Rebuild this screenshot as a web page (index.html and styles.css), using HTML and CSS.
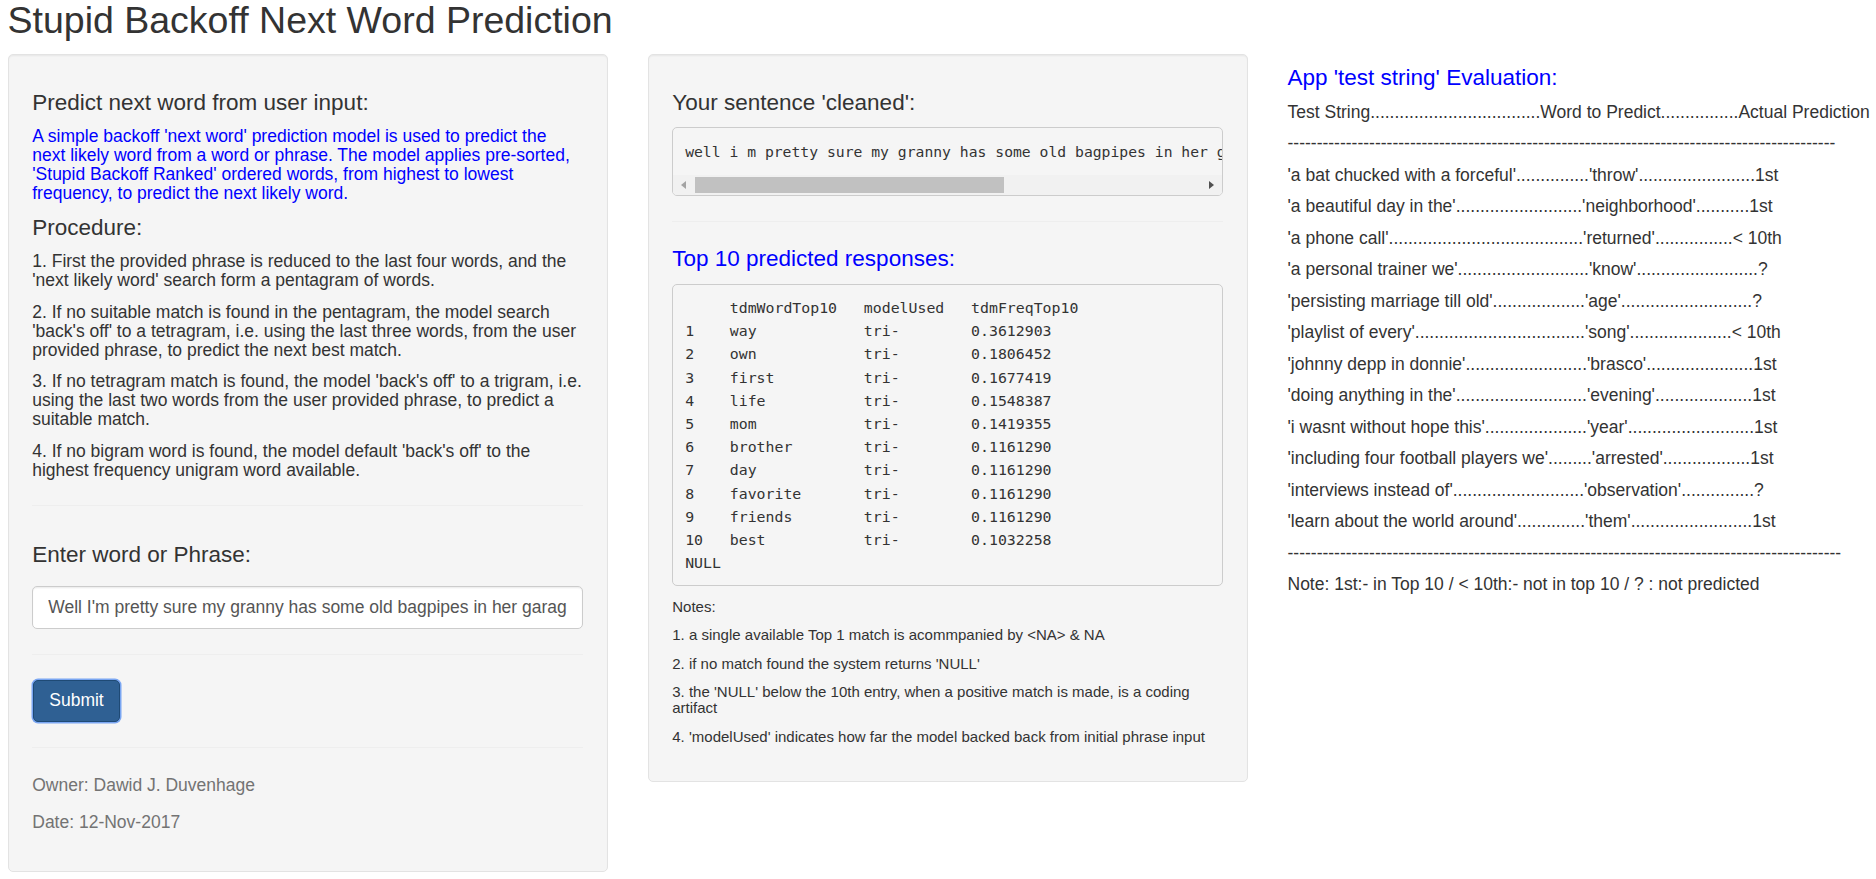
FILE: index.html
```html
<!DOCTYPE html>
<html lang="en">
<head>
<meta charset="utf-8">
<title>Stupid Backoff Next Word Prediction</title>
<link rel="stylesheet" href="styles.css">
</head>
<body>
<div class="page">
  <h2 class="title">Stupid Backoff Next Word Prediction</h2>
  <div class="row">
    <div class="col">
      <div class="well">
        <h4>Predict next word from user input:</h4>
        <h5 class="blue">A simple backoff 'next word' prediction model is used to predict the next likely word from a word or phrase. The model applies pre-sorted, 'Stupid Backoff Ranked' ordered words, from highest to lowest frequency, to predict the next likely word.</h5>
        <h4>Procedure:</h4>
        <h5>1. First the provided phrase is reduced to the last four words, and the 'next likely word' search form a pentagram of words.</h5>
        <h5>2. If no suitable match is found in the pentagram, the model search 'back's off' to a tetragram, i.e. using the last three words, from the user provided phrase, to predict the next best match.</h5>
        <h5>3. If no tetragram match is found, the model 'back's off' to a trigram, i.e. using the last two words from the user provided phrase, to predict a suitable match.</h5>
        <h5>4. If no bigram word is found, the model default 'back's off' to the highest frequency unigram word available.</h5>
        <hr>
        <div class="form-group">
          <label class="control-label" for="text"><h4>Enter word or Phrase:</h4></label>
          <input id="text" class="form-control" type="text" value="Well I'm pretty sure my granny has some old bagpipes in her garage I'll dust them off and be on my">
        </div>
        <hr>
        <button class="btn-primary" type="button">Submit</button>
        <hr>
        <span class="help-block">Owner: Dawid J. Duvenhage</span>
        <span class="help-block">Date: 12-Nov-2017</span>
      </div>
    </div>
    <div class="col">
      <div class="well">
        <h4>Your sentence 'cleaned':</h4>
        <div class="pre scroll-pre">
          <div class="pre-text">well i m pretty sure my granny has some old bagpipes in her garage i ll dust them off and be on my</div>
          <div class="scrollbar">
            <div class="sb-btn"><span class="arrow-left"></span></div>
            <div class="sb-track"><div class="sb-thumb"></div></div>
            <div class="sb-btn"><span class="arrow-right"></span></div>
          </div>
        </div>
        <hr>
        <h4 class="blue">Top 10 predicted responses:</h4>
        <pre class="pre table-pre">     tdmWordTop10   modelUsed   tdmFreqTop10
1    way            tri-        0.3612903
2    own            tri-        0.1806452
3    first          tri-        0.1677419
4    life           tri-        0.1548387
5    mom            tri-        0.1419355
6    brother        tri-        0.1161290
7    day            tri-        0.1161290
8    favorite       tri-        0.1161290
9    friends        tri-        0.1161290
10   best           tri-        0.1032258
NULL</pre>
        <h6>Notes:</h6>
        <h6>1. a single available Top 1 match is acommpanied by &lt;NA&gt; &amp; NA</h6>
        <h6>2. if no match found the system returns 'NULL'</h6>
        <h6>3. the 'NULL' below the 10th entry, when a positive match is made, is a coding artifact</h6>
        <h6>4. 'modelUsed' indicates how far the model backed back from initial phrase input</h6>
      </div>
    </div>
    <div class="col col-eval">
      <h4 class="blue">App 'test string' Evaluation:</h4>
      <h5>Test String...................................Word to Predict................Actual Prediction</h5>
      <h5>----------------------------------------------------------------------------------------------</h5>
      <h5>'a bat chucked with a forceful'...............'throw'........................1st</h5>
      <h5>'a beautiful day in the'..........................'neighborhood'...........1st</h5>
      <h5>'a phone call'........................................'returned'................&lt; 10th</h5>
      <h5>'a personal trainer we'...........................'know'.........................?</h5>
      <h5>'persisting marriage till old'...................'age'...........................?</h5>
      <h5>'playlist of every'...................................'song'.....................&lt; 10th</h5>
      <h5>'johnny depp in donnie'.........................'brasco'......................1st</h5>
      <h5>'doing anything in the'...........................'evening'....................1st</h5>
      <h5>'i wasnt without hope this'.....................'year'..........................1st</h5>
      <h5>'including four football players we'.........'arrested'..................1st</h5>
      <h5>'interviews instead of'...........................'observation'...............?</h5>
      <h5>'learn about the world around'..............'them'.........................1st</h5>
      <h5>-----------------------------------------------------------------------------------------------</h5>
      <h5>Note: 1st:- in Top 10 / &lt; 10th:- not in top 10 / ? : not predicted</h5>
    </div>
  </div>
</div>
</body>
</html>
```

FILE: styles.css
```css
html, body {
  margin: 0;
  padding: 0;
  background: #ffffff;
}

body {
  font-family: "Liberation Sans", Arial, Helvetica, sans-serif;
  font-size: 17.5px;
  line-height: 25px;
  color: #333333;
  overflow: hidden;
}

.page {
  padding: 0 0 0 7.5px;
}

.title {
  font-size: 37.5px;
  font-weight: normal;
  line-height: 41px;
  margin: 0 0 12.5px 0;
  color: #333333;
}

.row {
  display: flex;
  align-items: flex-start;
  gap: 40px;
}

.col {
  width: 600px;
  flex: 0 0 600px;
}

.col-eval {
  flex: 1 1 auto;
  min-width: 0;
  white-space: nowrap;
}

.well {
  box-sizing: border-box;
  width: 600px;
  background: #f5f5f5;
  border: 1.25px solid #e3e3e3;
  border-radius: 5px;
  padding: 23.75px;
  box-shadow: inset 0 1.25px 1.25px rgba(0, 0, 0, 0.05);
}

h4, h5, h6 {
  font-weight: normal;
  margin: 12.5px 0;
}

h4 { font-size: 22.5px; line-height: 24px; }
h5 { font-size: 17.5px; line-height: 19px; }
h6 { font-size: 15px; line-height: 16px; }

.blue { color: #0000ff; }

hr {
  margin: 25px 0;
  border: 0;
  border-top: 1.25px solid #eeeeee;
  height: 0;
}

.form-group {
  margin-bottom: 18.75px;
}

.control-label {
  display: inline-block;
  max-width: 100%;
  margin-bottom: 6.25px;
}

.form-control {
  display: block;
  box-sizing: border-box;
  width: 100%;
  height: 42.5px;
  padding: 7.5px 15px;
  font-family: "Liberation Sans", Arial, Helvetica, sans-serif;
  font-size: 17.5px;
  line-height: 25px;
  color: #555555;
  background: #ffffff;
  border: 1.25px solid #cccccc;
  border-radius: 5px;
  box-shadow: inset 0 1.25px 1.25px rgba(0, 0, 0, 0.075);
  outline: none;
}

.btn-primary {
  display: inline-block;
  padding: 7.5px 15px;
  font-family: "Liberation Sans", Arial, Helvetica, sans-serif;
  font-size: 17.5px;
  line-height: 25px;
  color: #ffffff;
  background: #2f6093;
  border: 1px solid #1f4a75;
  border-radius: 5px;
  box-shadow: 0 0 0 1.5px #7aa6f2;
  margin-left: 1px;
  vertical-align: middle;
}

.help-block {
  display: block;
  margin-top: 6.25px;
  margin-bottom: 12.5px;
  color: #737373;
}

.pre {
  background: #f5f5f5;
  border: 1.25px solid #cccccc;
  border-radius: 5px;
  color: #333333;
  font-family: "DejaVu Sans Mono", "Liberation Mono", monospace;
  font-size: 14.85px;
  line-height: 23.2px;
  margin: 0 0 12.5px 0;
}

.scroll-pre {
  overflow: hidden;
}

.pre-text {
  padding: 11.875px;
  font-size: 14.72px;
  line-height: 23px;
  white-space: pre;
  overflow: hidden;
}

.table-pre {
  padding: 12.5px 11.875px 10px 11.875px;
  white-space: pre;
}

.scrollbar {
  display: flex;
  height: 20px;
  background: #f1f1f1;
}

.sb-btn {
  width: 21px;
  flex: 0 0 21px;
  display: flex;
  align-items: center;
  justify-content: center;
}

.arrow-left {
  width: 0;
  height: 0;
  border-top: 4.5px solid transparent;
  border-bottom: 4.5px solid transparent;
  border-right: 5px solid #a3a3a3;
}

.arrow-right {
  width: 0;
  height: 0;
  border-top: 4.5px solid transparent;
  border-bottom: 4.5px solid transparent;
  border-left: 5px solid #505050;
}

.sb-track {
  flex: 1 1 auto;
  padding: 2px 0 2px 1px;
  box-sizing: border-box;
}

.sb-thumb {
  width: 309px;
  height: 100%;
  background: #c1c1c1;
}
```
